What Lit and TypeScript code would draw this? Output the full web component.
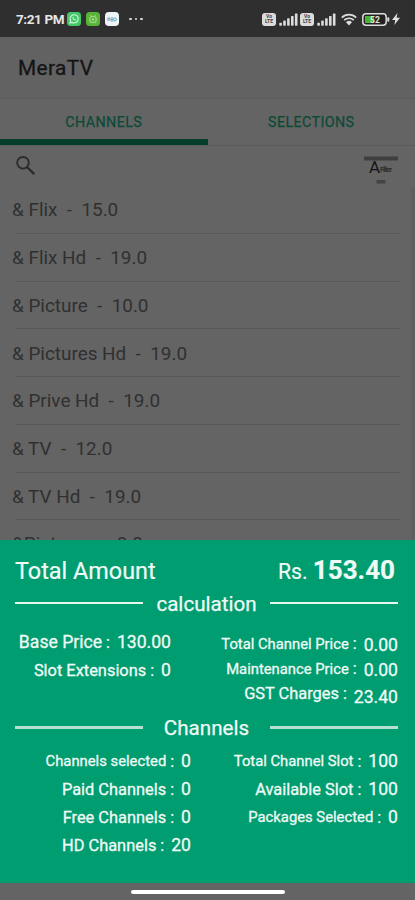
import { LitElement, html, css, svg } from "lit";
import { customElement } from "lit/decorators.js";

const channels: [string, string][] = [
  ["& Flix", "15.0"],
  ["& Flix Hd", "19.0"],
  ["& Picture", "10.0"],
  ["& Pictures Hd", "19.0"],
  ["& Prive Hd", "19.0"],
  ["& TV", "12.0"],
  ["& TV Hd", "19.0"],
  ["&Pictures", "0.0"],
];

const signal = () => html`<svg class="signal" width="19" height="13" viewBox="0 0 19 13">
  ${[0, 1, 2, 3, 4].map((i) => svg`<rect x=${0.3 + i * 3.9} y=${9.8 - i * 2.3} width="2.6" height=${2.9 + i * 2.3} rx=".6" fill="#dcdcdc" />`)}
</svg>`;

const lte = () => html`<span class="lte"><i>Vo</i><i>LTE</i></span>`;

const row = (label: string, value: string, size = "") =>
  html`<div class="row ${size}"><span class="label">${label}</span><span class="colon">:</span><span class="value">${value}</span></div>`;

@customElement("app-root")
export class AppRoot extends LitElement {
  static styles = css`
    :host { display: flex; flex-direction: column; width: 415px; height: 900px; overflow: hidden; background: #646464; font-family: Roboto, sans-serif; }
    * { box-sizing: border-box; }
    i { font-style: normal; }
    svg { display: block; flex: none; }
    .status { height: 37px; flex: none; background: #2f2f2f; display: flex; align-items: center; padding: 1px 15px 0 16px; color: #e6e6e6; }
    .time { font-size: 13.5px; font-weight: 700; letter-spacing: -0.4px; width: 51px; white-space: nowrap; }
    .apps { display: flex; gap: 5px; }
    .dots { display: flex; gap: 3.2px; margin-left: 10px; }
    .dots i { width: 2.5px; height: 2.5px; border-radius: 50%; background: #ddd; }
    .sys { display: flex; align-items: center; margin-left: auto; }
    .lte { width: 14px; height: 13px; border-radius: 3px; background: #dcdcdc; color: #444; display: flex; flex-direction: column; align-items: center; justify-content: center; font-size: 5px; line-height: 5px; font-weight: 700; }
    .signal { margin: 0 2px 0 3px; }
    .wifi { margin: 0 5px 0 3px; }
    .bolt { margin-left: 2px; }
    .bar { height: 62px; flex: none; background: #626262; display: flex; align-items: center; padding: 2px 18px 0; font-size: 20.8px; color: #151515; -webkit-text-stroke: 0.3px #151515; letter-spacing: 0.4px; border-bottom: 2px solid #5f5f5f; }
    .tabs { height: 47px; flex: none; display: flex; border-bottom: 1px solid #5b5b5b; }
    .tab { flex: 1; display: flex; align-items: center; justify-content: center; font-size: 14.3px; color: #0c4a37; -webkit-text-stroke: 0.25px #0c4a37; letter-spacing: 0.4px; padding-bottom: 1px; }
    .tab.on { border-bottom: 6px solid #043e2b; padding: 5px 0 0; }
    .tools { height: 39px; flex: none; display: flex; justify-content: space-between; padding: 10px 16px 0 16px; }
    .sort { margin-right: 1px; }
    .list { flex: 1; min-height: 0; overflow: hidden; display: flex; flex-direction: column; padding: 1px 15px 0 12px; background: linear-gradient(#5f5f5f, #5f5f5f) right 3px / 4px 100% no-repeat; }
    .item { height: 47.75px; flex: none; display: flex; align-items: center; font-size: 18.9px; color: #303030; white-space: pre; background: linear-gradient(#595959, #595959) 3px 100% / 100% 1px no-repeat; }
    .item:last-child { padding-bottom: 2px; }
    .sheet { height: 343px; flex: none; background: #009d71; color: #effaf5; padding: 14px 17px 0 15px; }
    .total { display: flex; justify-content: space-between; align-items: baseline; height: 36px; line-height: 32px; font-size: 23.4px; -webkit-text-stroke: 0.2px #effaf5; }
    .total b { font-size: 26px; }
    .amount { font-size: 21.2px; padding-right: 3px; }
    .heading { display: flex; align-items: center; justify-content: space-between; height: 28px; font-size: 20.6px; line-height: 28px; -webkit-text-stroke: 0.25px #effaf5; }
    .rule { width: 128px; height: 2px; background: #e4f8f0; margin-bottom: 3px; }
    .heading.second .rule { height: 3px; background: #b4e0d2; margin-bottom: 2px; }
    .cols { display: flex; justify-content: space-between; }
    .calc { height: 96px; }
    .calc .left { width: 156px; padding-top: 10px; }
    .calc .right { padding-top: 13px; }
    .calc .right .row { height: 25px; }
    .calc .right .value { padding-top: 2px; }
    .calc .right .mid .value { padding-top: 7px; }
    .slots { padding-top: 5px; }
    .slots .left { width: 176px; }
    .col { display: flex; flex-direction: column; align-items: flex-end; }
    .row { display: flex; align-items: center; height: 28px; font-size: 16.4px; white-space: nowrap; -webkit-text-stroke: 0.3px #effaf5; }
    .row.small { font-size: 14.8px; }
    .row.big { font-size: 17.6px; }
    .colon { margin: 0 7px 0 4px; font-size: 16px; }
    .value { font-size: 17.6px; }
    .nav { height: 17px; flex: none; display: flex; justify-content: center; padding-top: 7px; }
    .pill { width: 154px; height: 4px; border-radius: 2px; background: #fff; }
  `;

  render() {
    return html`
      <div class="status">
        <span class="time">7:21 PM</span>
        <div class="apps">
          <svg width="14" height="14" viewBox="0 0 14 14"><rect width="14" height="14" rx="3.5" fill="#43c768" /><path d="M3 11l.6-2.2A4.1 4.1 0 1 1 5.200 10.400z" fill="none" stroke="#d8f5df" stroke-width="1.100" /><path d="M5.400 5.200c0 2 1.400 3.300 3.200 3.400l.5-.9-1.100-.6-.5.5-1.100-1.100.4-.5-.5-1.200z" fill="#d8f5df" /></svg>
          <svg width="14" height="14" viewBox="0 0 14 14"><rect width="14" height="14" rx="3.500" fill="#58b436" /><path d="M4.500 3l1 1.500M9.500 3l-1 1.500" stroke="#a5d78c" /><rect x="3.800" y="4.500" width="6.400" height="6" rx="2.500" fill="none" stroke="#a5d78c" stroke-width="1.200" /><circle cx="7" cy="7.500" r="1.200" fill="#a5d78c" /></svg>
          <svg width="14" height="14" viewBox="0 0 14 14"><rect width="14" height="14" rx="3.800" fill="#edf3f6" /><path d="M3 9V6h2v3M6 5.800h2M6 7.500h2M6 9h2" fill="none" stroke="#7199ac" /><circle cx="9.900" cy="7.400" r="1.500" fill="none" stroke="#43add0" /></svg>
        </div>
        <div class="dots"><i></i><i></i><i></i></div>
        <div class="sys">
          ${lte()}${signal()}${lte()}${signal()}
          <svg class="wifi" width="16" height="13" viewBox="0 0 16 13"><g fill="none" stroke="#dcdcdc" stroke-width="1.700"><path d="M.8 4.600a10.300 10.300 0 0 1 14.400 0" /><path d="M3.200 7.200a6.900 6.900 0 0 1 9.600 0" /></g><path d="M5 9.200a4.300 4.300 0 0 1 6 0L8 12.600z" fill="#dcdcdc" /></svg>
          <svg width="28" height="13" viewBox="0 0 28 13"><rect x=".8" y=".8" width="23.400" height="11.400" rx="3.200" fill="#222" stroke="#dcdcdc" stroke-width="1.500" /><path d="M3 3h9v7H3z" fill="#4ab52c" /><rect x="25.300" y="4.300" width="2" height="4.400" rx="1" fill="#dcdcdc" /><text x="13" y="9.600" text-anchor="middle" font-family="Roboto, sans-serif" font-size="8.500" font-weight="700" fill="#e6e6e6">52</text></svg>
          <svg class="bolt" width="8" height="12" viewBox="0 0 8 12"><path d="M5.500 0L0 7h3.300L2.300 12 8 4.800H4.600z" fill="#e2e2e2" /></svg>
        </div>
      </div>
      <div class="bar">MeraTV</div>
      <div class="tabs"><div class="tab on">CHANNELS</div><div class="tab">SELECTIONS</div></div>
      <div class="tools">
        <svg width="19" height="19" viewBox="0 0 19 19"><circle cx="7" cy="6.800" r="5.800" fill="none" stroke="#2b2b2b" stroke-width="1.900" /><path d="M11.200 11.200l7 7" stroke="#2b2b2b" stroke-width="2.300" /></svg>
        <svg class="sort" width="34" height="30" viewBox="0 0 34 30"><path d="M0 2.500h34" stroke="#3f3f3f" stroke-width="4" /><text x="5" y="16.500" font-family="Roboto, sans-serif" font-size="17" fill="#151515">A</text><text x="16" y="16" font-family="Roboto, sans-serif" font-size="7" font-weight="700" fill="#2c2c2c" textLength="12">Filter</text><path d="M12.500 25.800h9" stroke="#444" stroke-width="3.500" /></svg>
      </div>
      <div class="list">${channels.map(([n, p]) => html`<div class="item">${n}  -  ${p}</div>`)}</div>
      <div class="sheet">
        <div class="total"><span>Total Amount</span><span class="amount">Rs. <b>153.40</b></span></div>
        <div class="heading"><i class="rule"></i>calculation<i class="rule"></i></div>
        <div class="cols calc">
          <div class="col left">${row("Base Price", "130.00", "big")}${row("Slot Extensions", "0")}</div>
          <div class="col right">${row("Total Channel Price", "0.00", "small")}${row("Maintenance Price", "0.00", "small")}${row("GST Charges", "23.40", "mid")}</div>
        </div>
        <div class="heading second"><i class="rule"></i>Channels<i class="rule"></i></div>
        <div class="cols slots">
          <div class="col left">${row("Channels selected", "0", "small")}${row("Paid Channels", "0")}${row("Free Channels", "0")}${row("HD Channels", "20")}</div>
          <div class="col right">${row("Total Channel Slot", "100", "small")}${row("Available Slot", "100")}${row("Packages Selected", "0", "small")}</div>
        </div>
      </div>
      <div class="nav"><i class="pill"></i></div>
    `;
  }
}
